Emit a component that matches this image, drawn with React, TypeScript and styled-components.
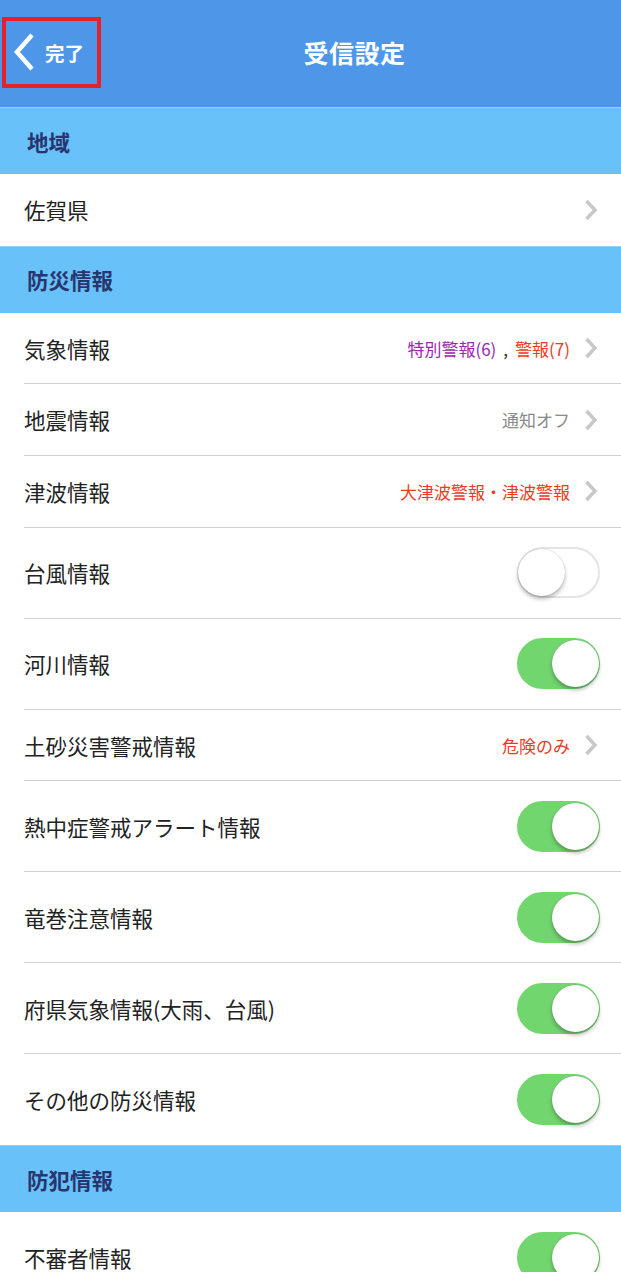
import React from 'react';
import styled, { createGlobalStyle } from 'styled-components';

const GlobalStyle = createGlobalStyle`
  html, body {
    margin: 0;
    padding: 0;
    background: #ffffff;
    overflow: hidden;
  }
  body {
    font-family: 'Noto Sans CJK JP', 'Noto Sans', 'Liberation Sans', sans-serif;
  }
`;

const Screen = styled.div`
  width: 621px;
  height: 1272px;
  overflow: hidden;
  background: #ffffff;
`;

const NavBar = styled.header`
  position: relative;
  display: flex;
  align-items: center;
  height: 107px;
  padding-bottom: 3px;
  box-sizing: border-box;
  background: #4e97e8;
  color: #ffffff;
`;

const BackButton = styled.button`
  display: flex;
  align-items: center;
  gap: 10px;
  width: 88px;
  height: 100%;
  padding: 0 0 0 13px;
  border: none;
  background: transparent;
  color: #ffffff;
  font-family: inherit;
  font-size: 19.5px;
  font-weight: 700;
  cursor: pointer;
`;

const Highlight = styled.div`
  position: absolute;
  left: 2px;
  top: 17px;
  width: 91px;
  height: 63px;
  border: 4px solid #e8202a;
  pointer-events: none;
`;

const Title = styled.h1`
  flex: 1;
  margin: 0;
  text-align: center;
  font-size: 25px;
  font-weight: 700;
  letter-spacing: 0.5px;
`;

const SectionHeader = styled.div`
  display: flex;
  align-items: center;
  height: 67px;
  padding-left: 27px;
  background: #68c1f8;
  border-top: 1px solid #8fd2fb;
  color: #283670;
  font-size: 21.5px;
  font-weight: 700;
  box-sizing: border-box;
`;

const Row = styled.div<{ $tall?: boolean; $last?: boolean }>`
  display: flex;
  align-items: center;
  justify-content: space-between;
  height: ${(p) => (p.$tall ? '91px' : '71.7px')};
  margin-left: 24px;
  padding-right: 21px;
  border-bottom: ${(p) => (p.$last ? 'none' : '1px solid #d2d2d2')};
  box-sizing: border-box;
`;

const Label = styled.span`
  color: #222222;
  font-size: 21.5px;
`;

const Detail = styled.div`
  display: flex;
  align-items: center;
  gap: 14px;
  margin-right: 2px;
  font-size: 17px;
`;

const Value = styled.span<{ $color: string }>`
  color: ${(p) => p.$color};
`;

const Comma = styled.span`
  margin: 0 7px;
  color: #333333;
`;

const Track = styled.div<{ $on: boolean }>`
  position: relative;
  width: 83px;
  height: 51px;
  border-radius: 26px;
  box-sizing: border-box;
  background: ${(p) => (p.$on ? '#72d66f' : '#ffffff')};
  border: 2px solid ${(p) => (p.$on ? '#72d66f' : '#e4e4e4')};
`;

const Knob = styled.div<{ $on: boolean }>`
  position: absolute;
  top: 0;
  left: ${(p) => (p.$on ? '33px' : '-1px')};
  width: 47px;
  height: 47px;
  border-radius: 50%;
  background: #ffffff;
  box-shadow: 0 3px 4px rgba(0, 0, 0, 0.28), 0 0 1px rgba(0, 0, 0, 0.25);
`;

const Chevron = () => (
  <svg width="14" height="22" viewBox="0 0 14 22">
    <path d="M2.5 2 L11 11 L2.5 20" fill="none" stroke="#c7c7cc" strokeWidth="3.5" />
  </svg>
);

const BackChevron = () => (
  <svg width="22" height="38" viewBox="0 0 22 38">
    <path d="M19 2 L4 19 L19 36" fill="none" stroke="#ffffff" strokeWidth="4.5" />
  </svg>
);

const Toggle: React.FC<{ on: boolean }> = ({ on }) => (
  <Track $on={on}>
    <Knob $on={on} />
  </Track>
);

interface Part {
  text: string;
  color: string;
}

const LinkRow: React.FC<{ label: string; parts?: Part[]; last?: boolean }> = ({ label, parts = [], last }) => (
  <Row $last={last}>
    <Label>{label}</Label>
    <Detail>
      <span>
        {parts.map((p, i) => (
          <React.Fragment key={i}>
            {i > 0 && <Comma>,</Comma>}
            <Value $color={p.color}>{p.text}</Value>
          </React.Fragment>
        ))}
      </span>
      <Chevron />
    </Detail>
  </Row>
);

const ToggleRow: React.FC<{ label: string; on: boolean; last?: boolean }> = ({ label, on, last }) => (
  <Row $tall $last={last}>
    <Label>{label}</Label>
    <Toggle on={on} />
  </Row>
);

const PURPLE = '#9c27b0';
const RED = '#ee3a1e';
const GRAY = '#8a8a8a';

export default function App() {
  return (
    <Screen>
      <GlobalStyle />
      <NavBar>
        <BackButton>
          <BackChevron />
          完了
        </BackButton>
        <Highlight />
        <Title>受信設定</Title>
      </NavBar>

      <SectionHeader>地域</SectionHeader>
      <LinkRow label="佐賀県" last />

      <SectionHeader>防災情報</SectionHeader>
      <LinkRow
        label="気象情報"
        parts={[
          { text: '特別警報(6)', color: PURPLE },
          { text: '警報(7)', color: RED },
        ]}
      />
      <LinkRow label="地震情報" parts={[{ text: '通知オフ', color: GRAY }]} />
      <LinkRow label="津波情報" parts={[{ text: '大津波警報・津波警報', color: RED }]} />
      <ToggleRow label="台風情報" on={false} />
      <ToggleRow label="河川情報" on />
      <LinkRow label="土砂災害警戒情報" parts={[{ text: '危険のみ', color: RED }]} />
      <ToggleRow label="熱中症警戒アラート情報" on />
      <ToggleRow label="竜巻注意情報" on />
      <ToggleRow label="府県気象情報(大雨、台風)" on />
      <ToggleRow label="その他の防災情報" on last />

      <SectionHeader>防犯情報</SectionHeader>
      <ToggleRow label="不審者情報" on />
    </Screen>
  );
}
